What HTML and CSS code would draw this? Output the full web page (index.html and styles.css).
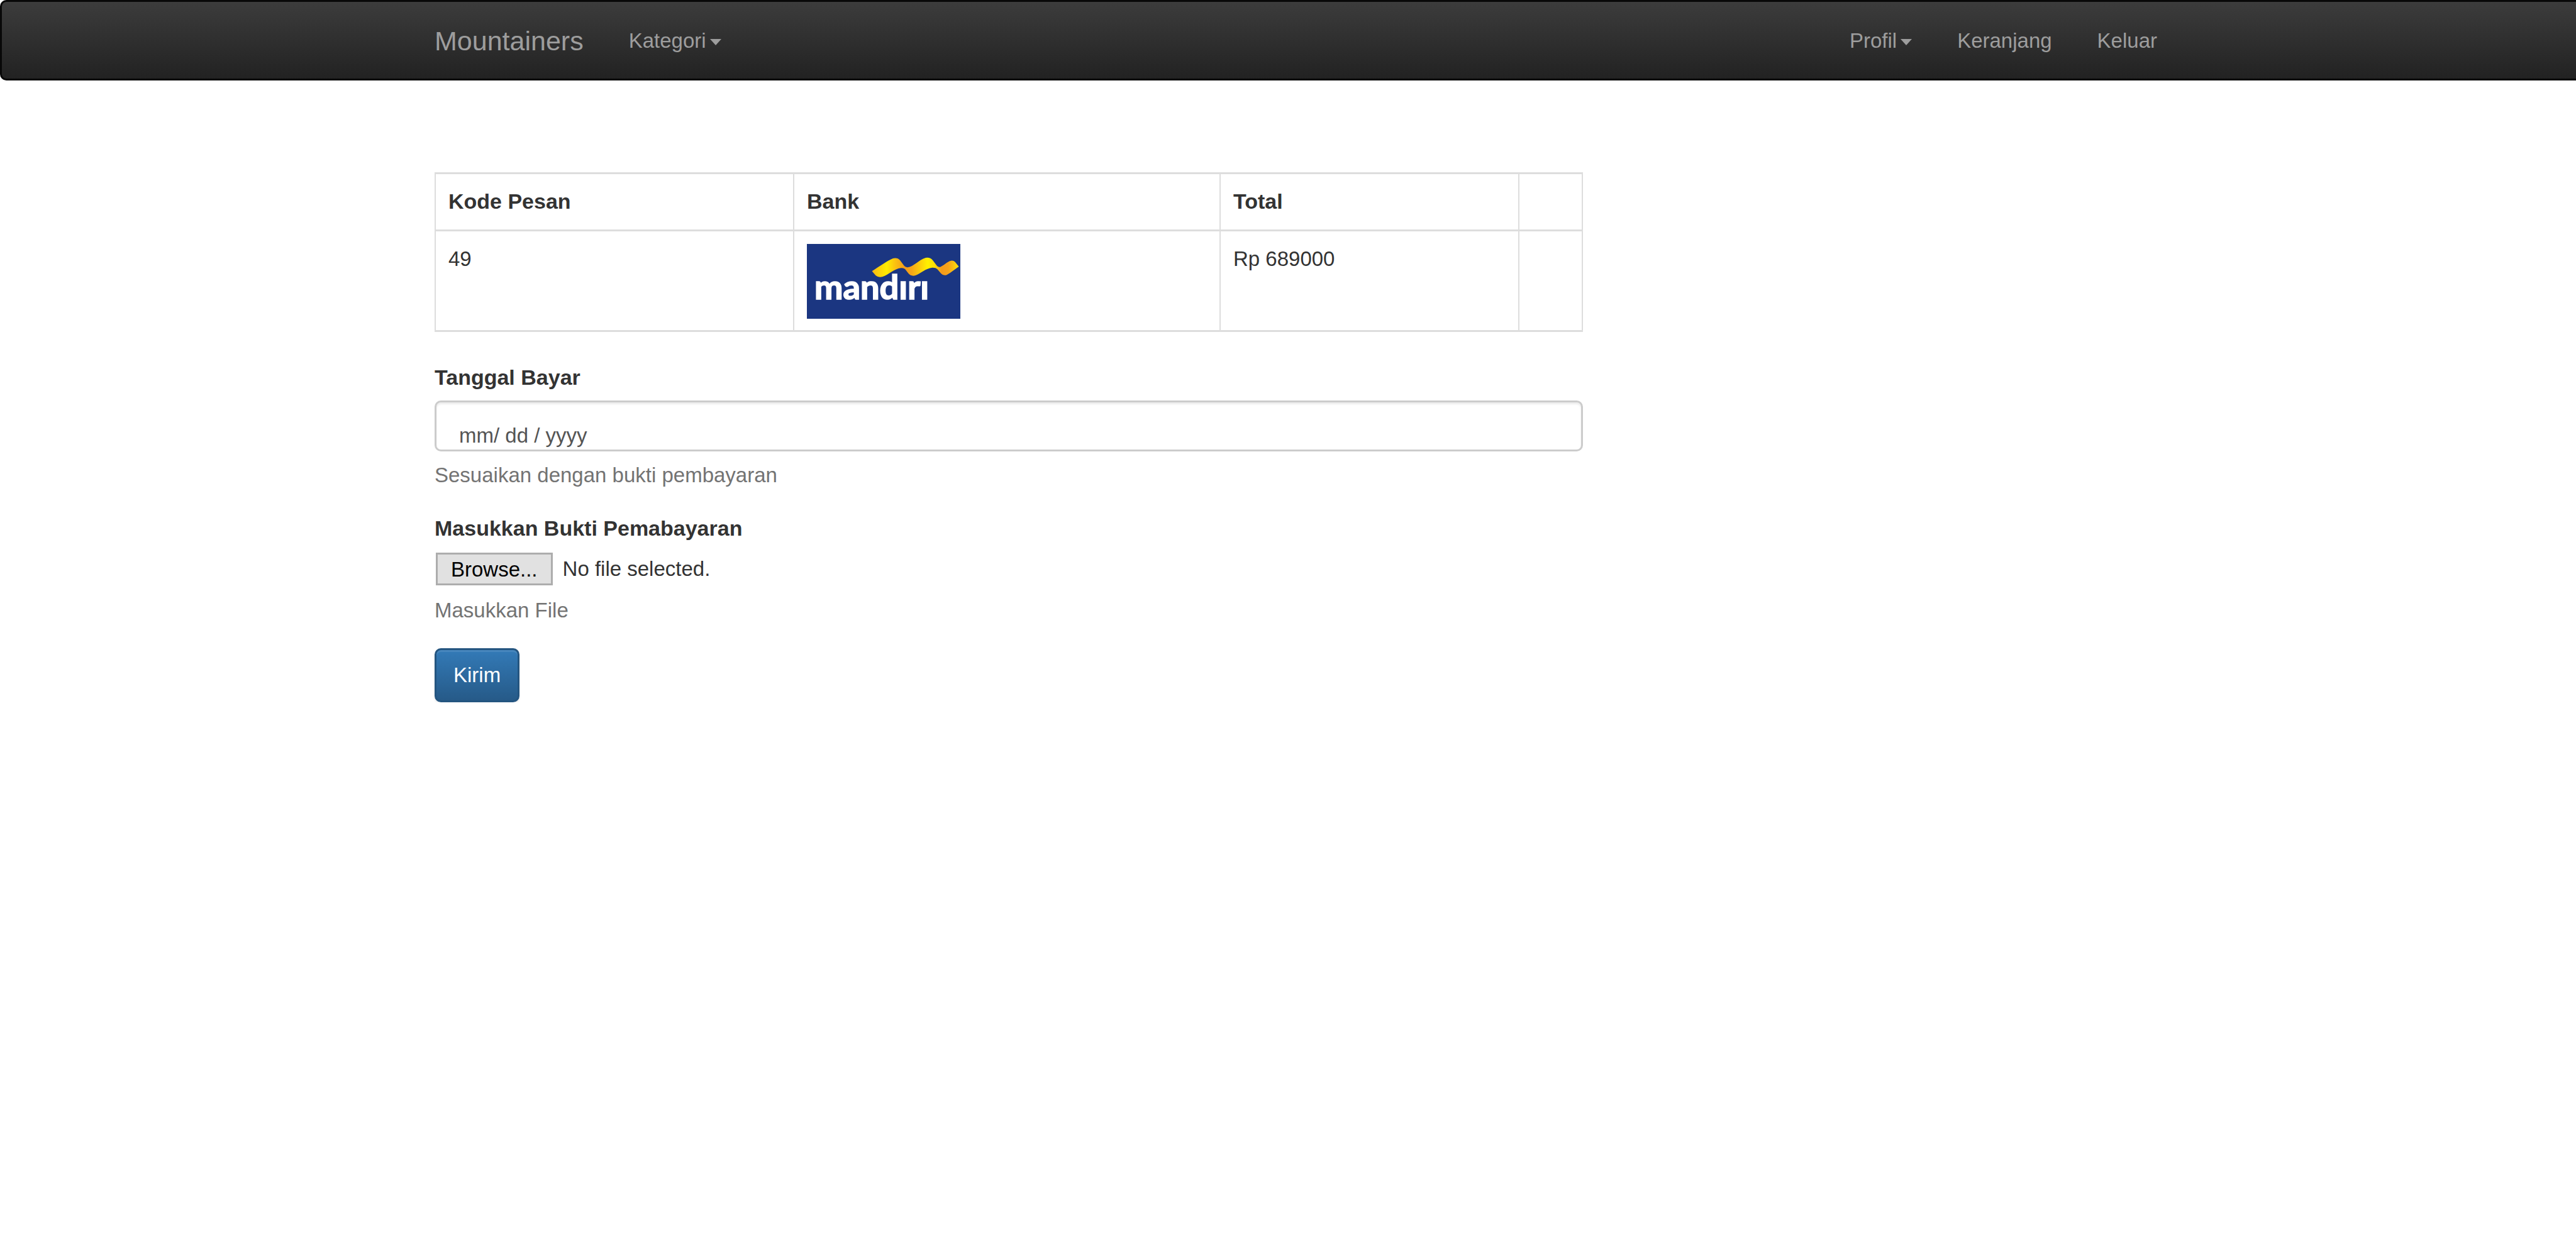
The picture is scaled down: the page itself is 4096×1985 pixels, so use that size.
FILE: index.html
```html
<!DOCTYPE html>
<html lang="id">
<head>
<meta charset="utf-8">
<title>Mountainers</title>
<link rel="stylesheet" href="styles.css">
</head>
<body>
<nav class="navbar">
  <a class="brand" href="#">Mountainers</a>
  <a class="nav-link" href="#">Kategori<span class="caret"></span></a>
  <div class="nav-right">
    <a class="nav-link" href="#">Profil<span class="caret"></span></a>
    <a class="nav-link" href="#">Keranjang</a>
    <a class="nav-link" href="#">Keluar</a>
  </div>
</nav>
<main class="content">
  <form class="payment">
    <table class="order">
      <colgroup><col class="col-code"><col class="col-bank"><col class="col-total"><col></colgroup>
      <thead>
        <tr><th>Kode Pesan</th><th>Bank</th><th>Total</th><th></th></tr>
      </thead>
      <tbody>
        <tr>
          <td>49</td>
          <td>
            <svg class="bank-logo" viewBox="0 0 891 435" preserveAspectRatio="none" role="img" aria-label="Bank Mandiri">
              <defs>
                <linearGradient id="ribbon" gradientUnits="userSpaceOnUse" x1="378" y1="0" x2="882" y2="0">
                  <stop offset="0" stop-color="#f9b915"/>
                  <stop offset=".17" stop-color="#ffec00"/>
                  <stop offset=".26" stop-color="#fbc40f"/>
                  <stop offset=".38" stop-color="#f39a1c"/>
                  <stop offset=".46" stop-color="#f6a818"/>
                  <stop offset=".64" stop-color="#fff000"/>
                  <stop offset=".72" stop-color="#fde005"/>
                  <stop offset=".8" stop-color="#f39a1c"/>
                  <stop offset=".88" stop-color="#f6a31a"/>
                  <stop offset="1" stop-color="#fee308"/>
                </linearGradient>
              </defs>
              <rect width="891" height="435" fill="#1b3681"/>
              <path fill="url(#ribbon)" d="M378 158C420 132 465 98 500 84Q526 78 541 95L560 121Q569 136 584 136C620 132 650 92 690 80Q716 76 730 94L751 122Q760 136 774 134C796 126 812 104 836 98Q850 95 860 104L882 132C860 146 840 166 812 180Q792 187 779 172L757 146Q748 137 728 138C690 142 660 172 628 184Q604 189 590 172L570 146Q561 138 546 140C506 144 478 178 438 191Q414 196 400 184Z"/>
              <text class="logo-text" x="44" y="321">mandırı</text>
            </svg>
          </td>
          <td>Rp 689000</td>
          <td></td>
        </tr>
      </tbody>
    </table>
    <div class="group">
      <label for="tanggal">Tanggal Bayar</label>
      <input class="date" id="tanggal" type="text" placeholder="mm/ dd / yyyy">
      <p class="help">Sesuaikan dengan bukti pembayaran</p>
    </div>
    <div class="group">
      <label for="bukti">Masukkan Bukti Pemabayaran</label>
      <div class="file-row">
        <input id="bukti" type="file" hidden>
        <button class="browse" type="button" onclick="document.getElementById('bukti').click()">Browse...</button>
        <span>No file selected.</span>
      </div>
      <p class="help">Masukkan File</p>
    </div>
    <button class="submit" type="submit">Kirim</button>
  </form>
</main>
</body>
</html>
```
FILE: styles.css
```css
* { box-sizing: border-box; }

body {
  margin: 0;
  background: #fff;
  color: #333;
  font: 33px/48px "Liberation Sans", Arial, sans-serif;
}

.navbar {
  display: flex;
  padding: 38px 630px 36px 688px;
  border: 3px solid #080808;
  border-right: 0;
  border-radius: 10px 0 0 10px;
  background: linear-gradient(#3c3c3c, #222);
}

.brand,
.nav-link {
  color: #9d9d9d;
  text-decoration: none;
}

.brand {
  margin-right: 36px;
  font-size: 43px;
}

.nav-link { padding: 0 36px; }

.nav-right {
  display: flex;
  margin-left: auto;
}

.caret {
  display: inline-block;
  margin-left: 6px;
  border: 9px solid transparent;
  border-top: 10px solid #9d9d9d;
  border-bottom: 0;
  vertical-align: middle;
}

.content {
  display: grid;
  grid-template-columns: 2fr 1fr;
  gap: 36px;
  padding: 146px 630px 0 691px;
}

.order {
  width: 100%;
  margin-bottom: 48px;
  border-collapse: collapse;
  table-layout: fixed;
}

.col-code { width: 570px; }
.col-bank { width: 678px; }
.col-total { width: 475px; }

th,
td {
  border: solid #ddd;
  border-width: 3px 2px;
  text-align: left;
  vertical-align: top;
}

th {
  height: 91px;
  padding: 19px 20px;
  font-size: 34px;
}

td { padding: 20px 20px 18px; }

.bank-logo {
  display: block;
  width: 244px;
  height: 119px;
}

.logo-text {
  fill: #fff;
  stroke: #fff;
  stroke-width: 6px;
  font: 700 198px Lato, sans-serif;
}

.group { margin-bottom: 36px; }

label {
  display: block;
  margin-bottom: 13px;
  font-size: 34px;
  font-weight: bold;
}

.date {
  display: block;
  width: 100%;
  height: 81px;
  padding: 31px 36px 0;
  border: 3px solid #ccc;
  border-radius: 10px;
  box-shadow: inset 0 3px 3px rgba(0, 0, 0, .075);
  color: #555;
  font: inherit;
}

.date::placeholder {
  color: #555;
  opacity: 1;
}

.help {
  margin: 14px 0 0;
  color: #737373;
}

.file-row {
  display: flex;
  align-items: center;
  gap: 16px;
  padding: 2px;
}

.browse {
  height: 52px;
  padding: 0 21px;
  border: 3px solid #adadad;
  background: #e1e1e1;
  color: #000;
  font: inherit;
  line-height: 48px;
}

.submit {
  display: block;
  height: 86px;
  padding: 0 27px;
  border: 3px solid #245580;
  border-radius: 10px;
  background: linear-gradient(#337ab7, #265a88);
  box-shadow: inset 0 3px 0 rgba(255, 255, 255, .1), 0 3px 3px rgba(0, 0, 0, .075);
  color: #fff;
  font: inherit;
}
```
